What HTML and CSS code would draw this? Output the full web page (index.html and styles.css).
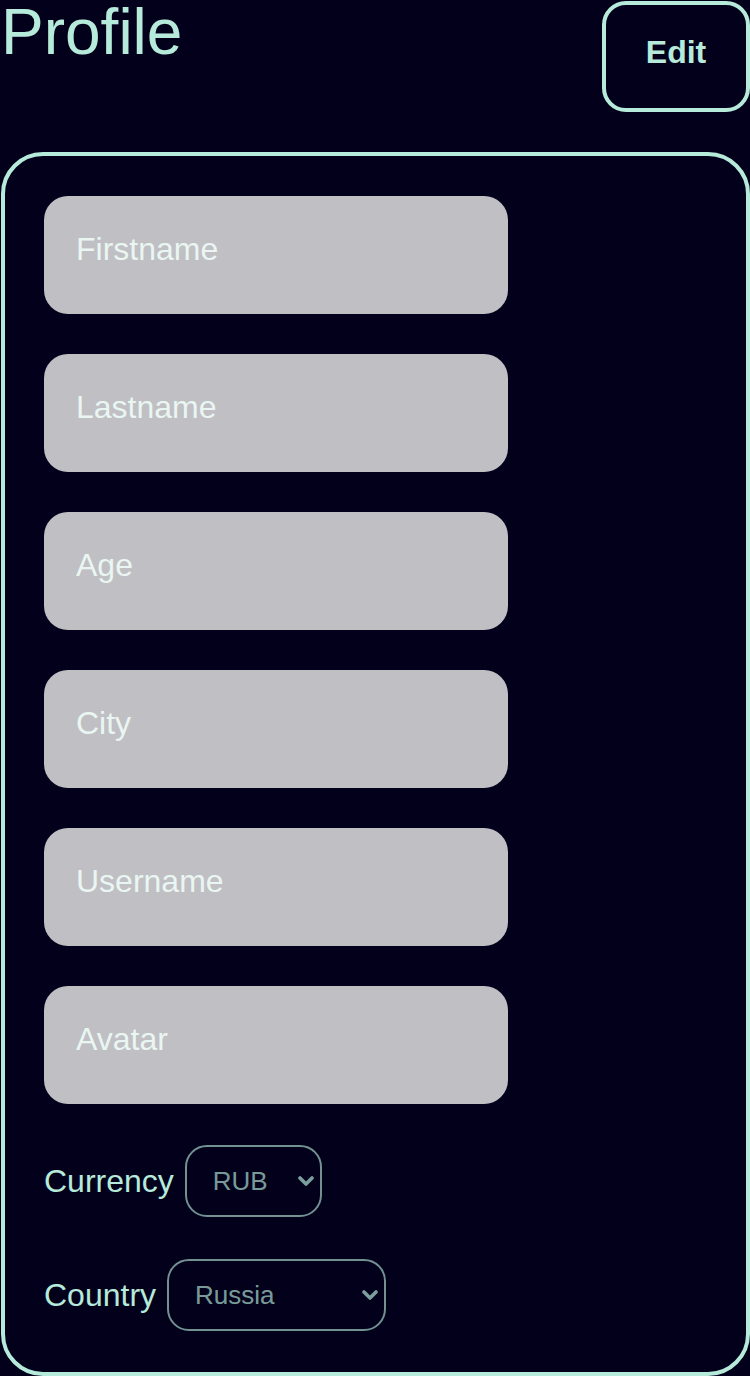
FILE: index.html
```html
<!DOCTYPE html>
<html lang="en">
<head>
<meta charset="utf-8">
<title>Profile</title>
<link rel="stylesheet" href="styles.css">
</head>
<body>
<div class="page">
  <header class="header">
    <h1 class="title">Profile</h1>
    <button class="edit-btn" type="button">Edit</button>
  </header>
  <form class="card">
    <input class="field" type="text" placeholder="Firstname">
    <input class="field" type="text" placeholder="Lastname">
    <input class="field" type="text" placeholder="Age">
    <input class="field" type="text" placeholder="City">
    <input class="field" type="text" placeholder="Username">
    <input class="field" type="text" placeholder="Avatar">
    <div class="select-row">
      <label class="select-label" for="currency">Currency</label>
      <div class="select-wrap select-currency">
        <select id="currency" class="select">
          <option>RUB</option>
          <option>EUR</option>
          <option>USD</option>
        </select>
        <svg class="chevron" viewBox="0 0 16 10" width="16" height="10" aria-hidden="true"><path d="M2 2 L8 8 L14 2" fill="none" stroke="currentColor" stroke-width="3.6" stroke-linecap="round" stroke-linejoin="round"/></svg>
      </div>
    </div>
    <div class="select-row">
      <label class="select-label" for="country">Country</label>
      <div class="select-wrap select-country">
        <select id="country" class="select">
          <option>Russia</option>
          <option>Belarus</option>
          <option>Ukraine</option>
          <option>Kazakhstan</option>
          <option>Armenia</option>
        </select>
        <svg class="chevron" viewBox="0 0 16 10" width="16" height="10" aria-hidden="true"><path d="M2 2 L8 8 L14 2" fill="none" stroke="currentColor" stroke-width="3.6" stroke-linecap="round" stroke-linejoin="round"/></svg>
      </div>
    </div>
  </form>
</div>
</body>
</html>
```
FILE: styles.css
```css
html, body {
  margin: 0;
  padding: 0;
  background: #03001c;
}

body {
  font-family: "Liberation Sans", Arial, sans-serif;
  color: #b6eada;
  width: 750px;
  height: 1376px;
  overflow: hidden;
}

.page {
  padding: 1px 0 0 1px;
}

.header {
  display: flex;
  justify-content: space-between;
  align-items: flex-start;
}

.title {
  margin: -1px 0 0 0;
  font-size: 64px;
  font-weight: 400;
  line-height: 1;
  color: #b6eada;
}

.edit-btn {
  width: 148px;
  height: 111px;
  box-sizing: border-box;
  border: 4px solid #b6eada;
  border-radius: 24px;
  background: transparent;
  color: #b6eada;
  font-family: "Liberation Sans", Arial, sans-serif;
  font-size: 32px;
  font-weight: 700;
  padding: 0 0 8px 0;
  cursor: pointer;
}

.card {
  margin-top: 40px;
  border: 4px solid #b6eada;
  border-radius: 42px;
  padding: 40px 39px 40px 39px;
  display: flex;
  flex-direction: column;
  align-items: flex-start;
  gap: 40px;
}

.field {
  width: 464px;
  height: 118px;
  box-sizing: border-box;
  border: none;
  outline: none;
  border-radius: 24px;
  background: #c0bfc4;
  padding: 0 32px 12px 32px;
  font-family: "Liberation Sans", Arial, sans-serif;
  font-size: 32px;
  color: #03001c;
}

.field::placeholder {
  color: #e9f6f1;
  opacity: 1;
}

.select-row {
  height: 74px;
  display: flex;
  align-items: center;
  gap: 11px;
}

.select-label {
  font-size: 32px;
  color: #b6eada;
}

.select-wrap {
  position: relative;
  height: 72px;
  color: rgba(182, 234, 218, 0.68);
}

.select-currency { width: 137px; }
.select-country { width: 219px; }

.select {
  appearance: none;
  -webkit-appearance: none;
  width: 100%;
  height: 100%;
  box-sizing: border-box;
  border: 2px solid rgba(182, 234, 218, 0.62);
  border-radius: 22px;
  background: transparent;
  color: rgba(182, 234, 218, 0.68);
  font-family: "Liberation Sans", Arial, sans-serif;
  font-size: 26px;
  padding: 0 40px 0 26px;
  outline: none;
}

.chevron {
  position: absolute;
  right: 8px;
  top: 50%;
  width: 16px;
  height: 10px;
  margin-top: -5px;
  pointer-events: none;
}
```
